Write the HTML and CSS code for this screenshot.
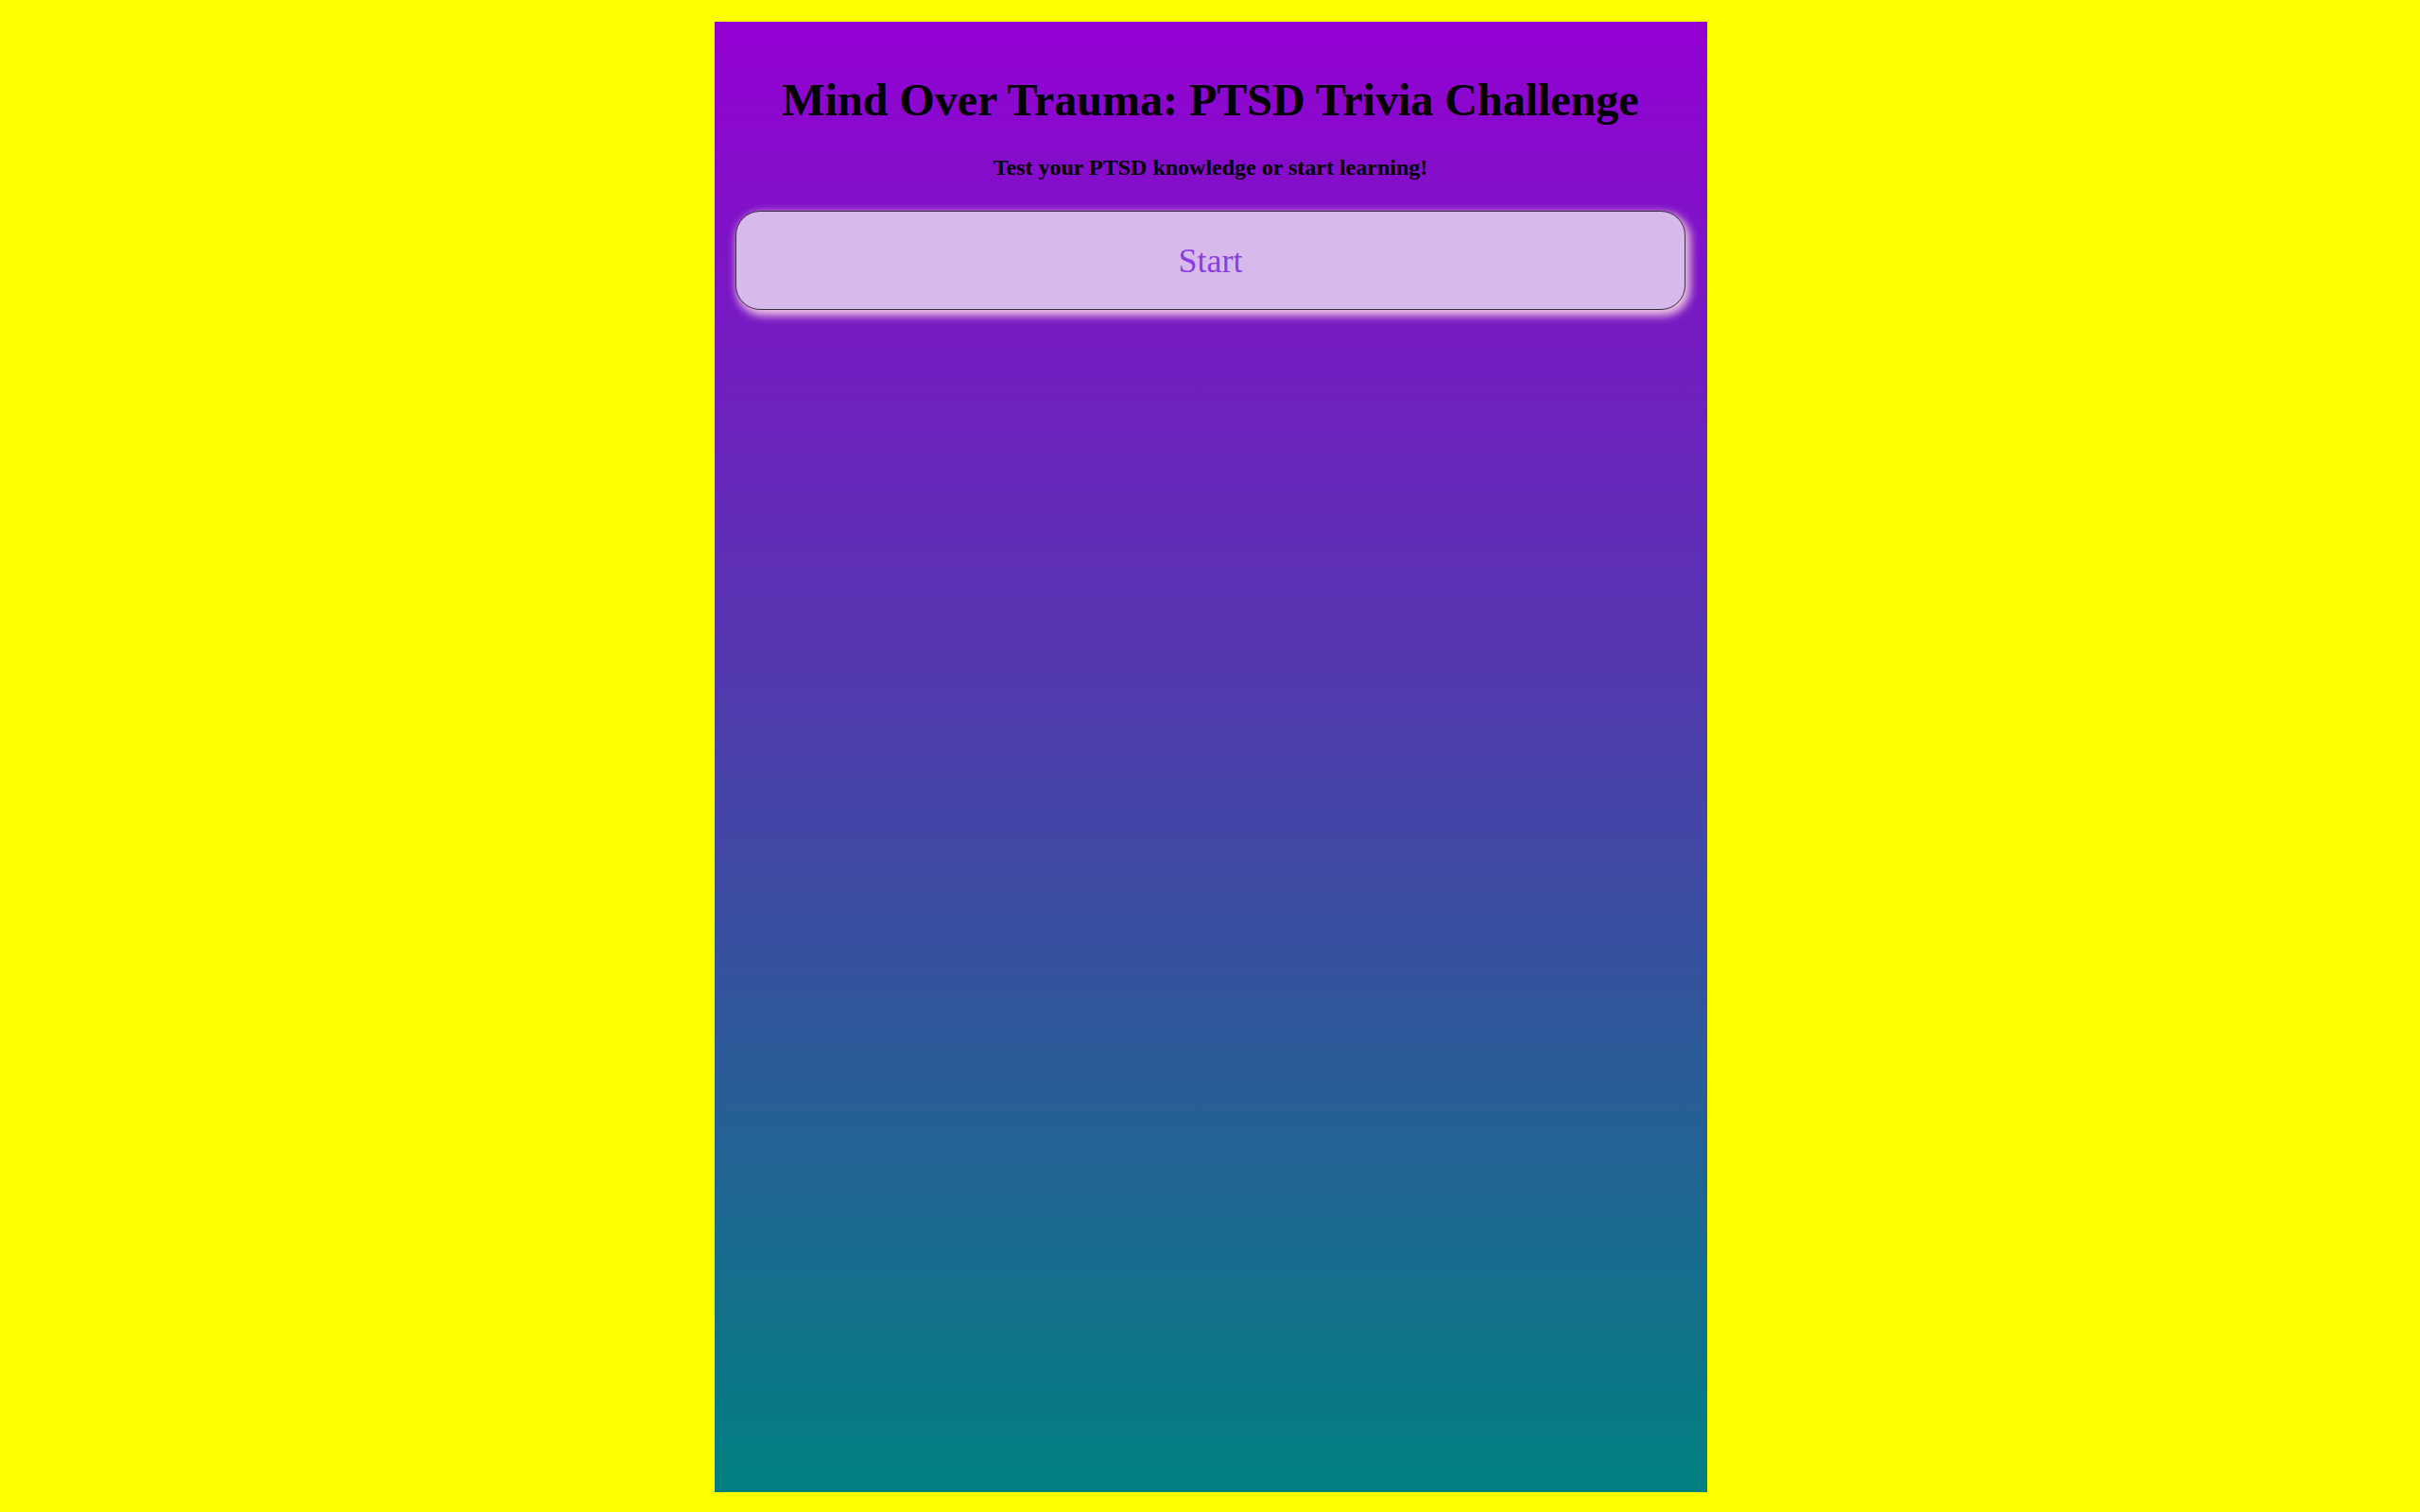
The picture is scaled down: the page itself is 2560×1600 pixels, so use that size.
FILE: index.html
```html
<!DOCTYPE html>
<html lang="en">
<head>
<meta charset="utf-8">
<title>Mind Over Trauma: PTSD Trivia Challenge</title>
<link rel="stylesheet" href="styles.css">
</head>
<body>
<main class="card">
  <h1 class="title">Mind Over Trauma: PTSD Trivia Challenge</h1>
  <p class="subtitle">Test your PTSD knowledge or start learning!</p>
  <button class="start-btn" type="button">Start</button>
</main>
</body>
</html>
```

FILE: styles.css
```css
html, body {
  margin: 0;
  padding: 0;
  background: #ffff00;
}

body {
  font-family: "Liberation Serif", "Times New Roman", serif;
  padding-top: 23px;
  padding-left: 2px;
  min-height: 1600px;
  box-sizing: border-box;
}

.card {
  width: 1050px;
  height: 1556px;
  margin: 0 auto;
  box-sizing: border-box;
  padding: 0 23px 0 22px;
  background: linear-gradient(to bottom, #9400d3, #008080);
  display: flex;
  flex-direction: column;
  align-items: stretch;
}

.title {
  margin: 55px 0 0;
  font-size: 48px;
  font-weight: bold;
  line-height: 55px;
  text-align: center;
  color: #000;
}

.subtitle {
  margin: 30px 0 0;
  font-size: 24px;
  font-weight: bold;
  line-height: 28px;
  text-align: center;
  color: #000;
}

.start-btn {
  margin-top: 32px;
  height: 105px;
  border: 1px solid #363040;
  border-radius: 26px;
  background: #d7b9ec;
  color: #8b3de0;
  font-family: "Liberation Serif", "Times New Roman", serif;
  font-size: 36px;
  box-shadow: 3px 4px 10px 2px rgba(255, 215, 230, 0.9);
  cursor: pointer;
}
```
